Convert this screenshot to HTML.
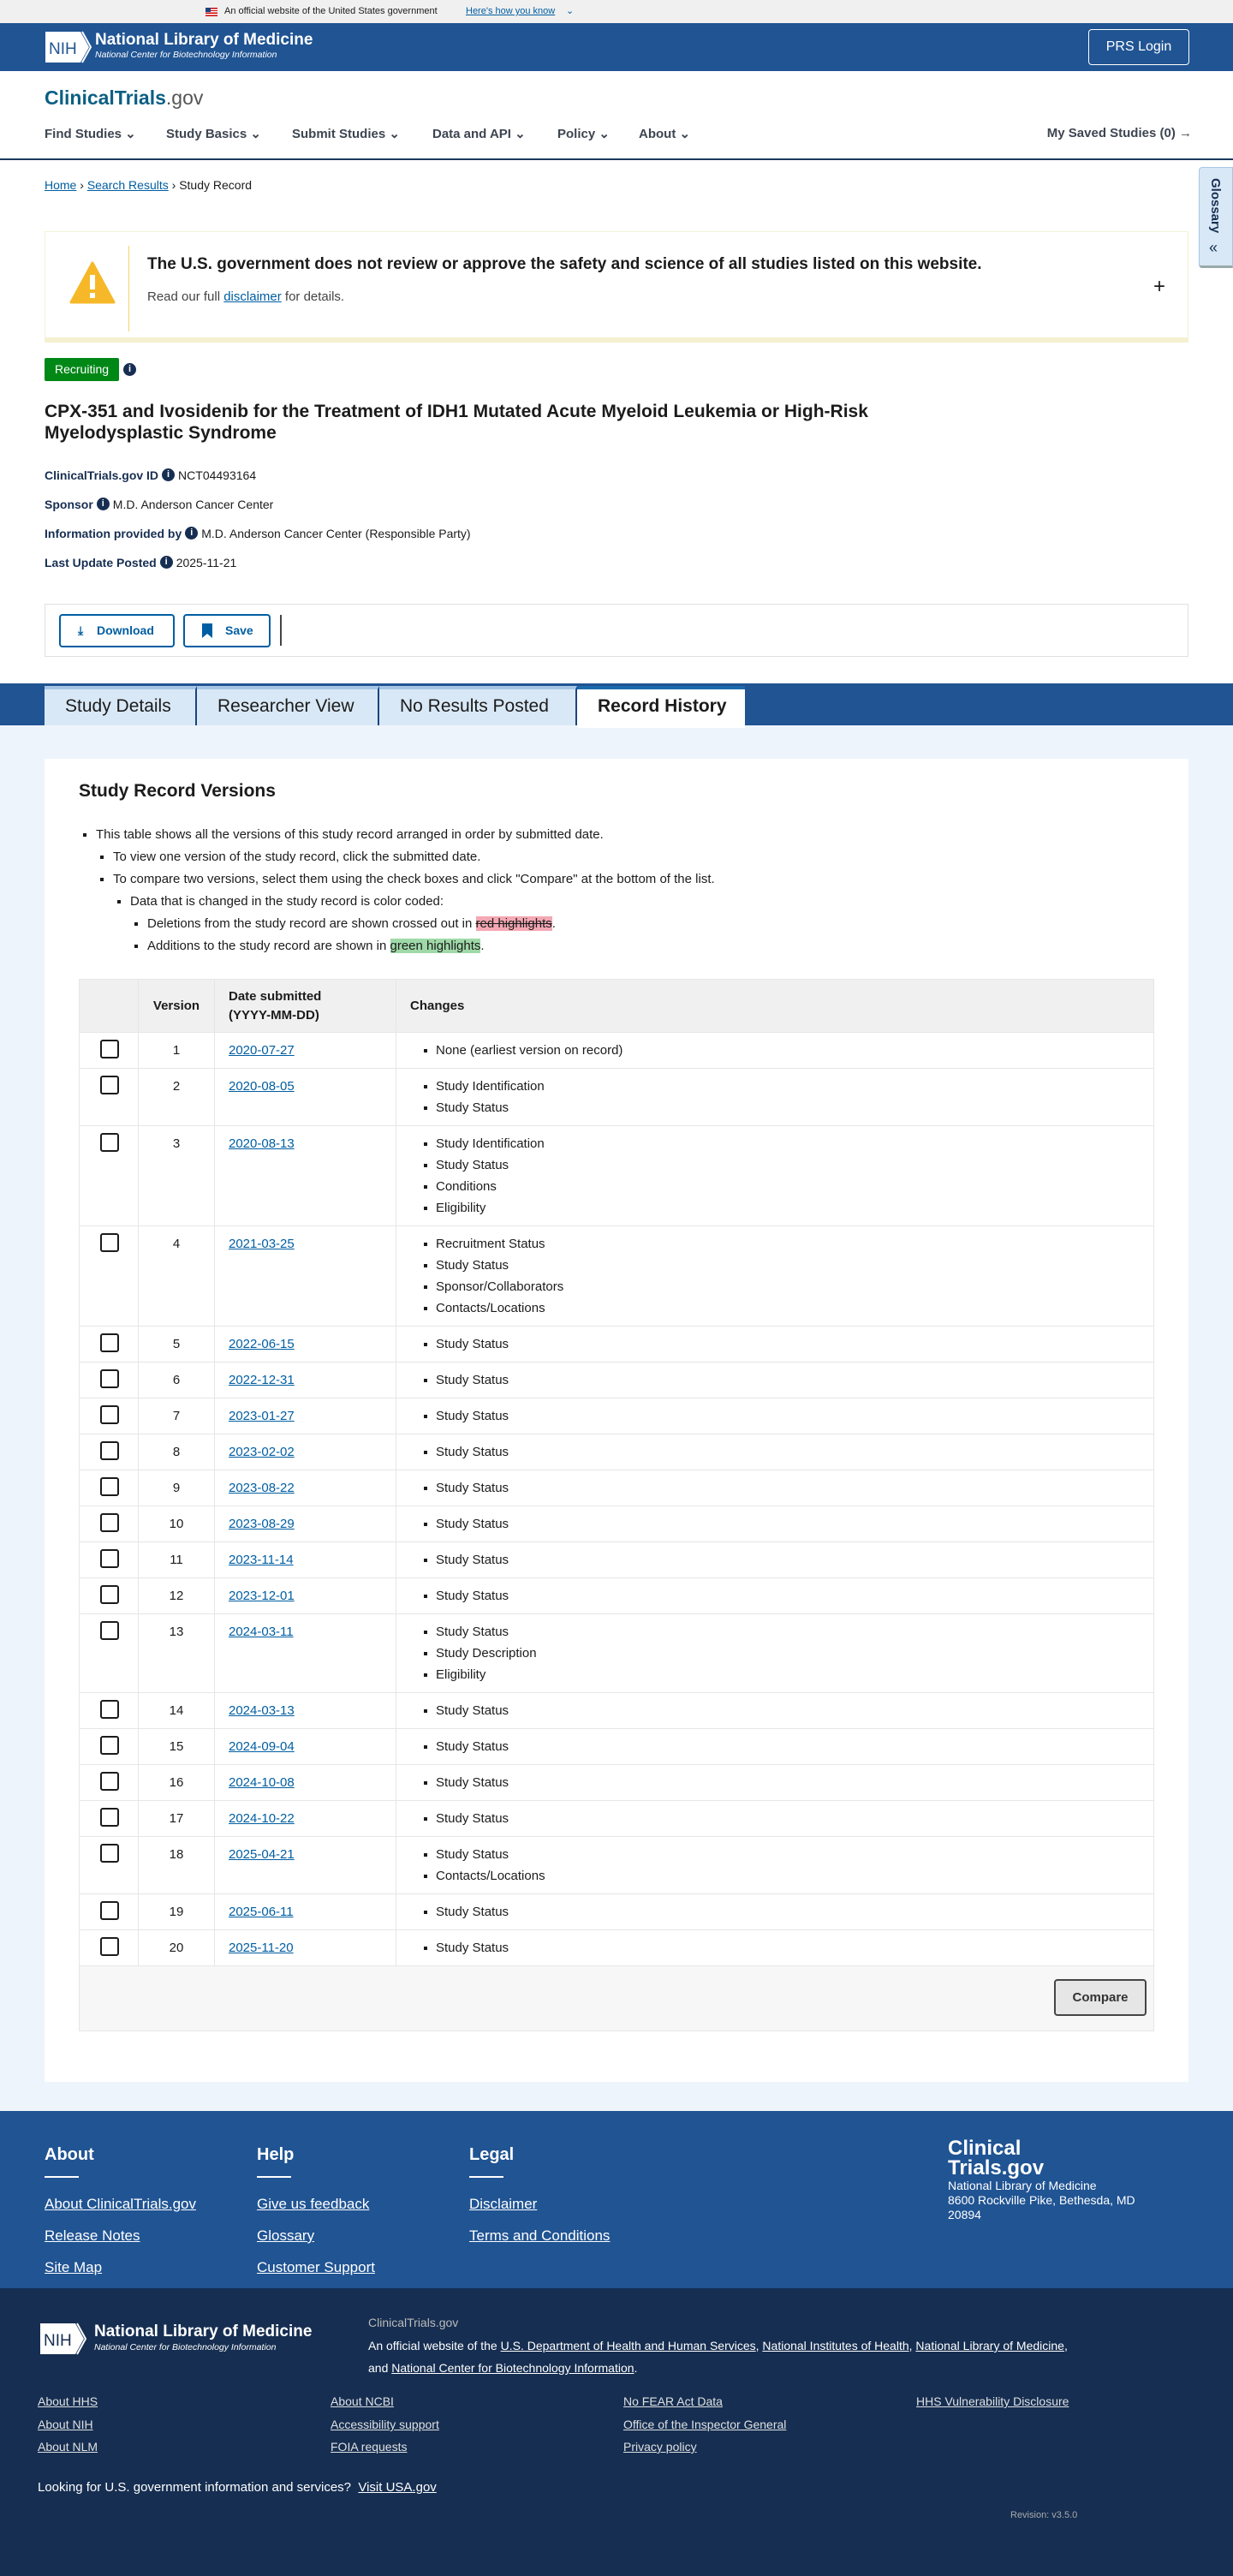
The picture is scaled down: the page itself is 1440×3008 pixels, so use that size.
<!DOCTYPE html>
<html><head><meta charset="utf-8">
<style>
*{box-sizing:border-box;margin:0;padding:0}
body{width:1440px;height:3008px;font-family:"Liberation Sans",Arial,sans-serif;color:#1b1b1b;background:#fff;position:relative;overflow:hidden}
a{color:#005ea2;text-decoration:underline}
.abs{position:absolute}
.gov{top:0;left:0;width:1440px;height:27px;background:#f0f0f0;font-size:11px;line-height:27px}
.hdr{top:27px;left:0;width:1440px;height:56px;background:#205493}
.nav a{color:#3d4551;text-decoration:none;font-weight:bold;font-size:15px}
.info{display:inline-block;width:15px;height:15px;border-radius:50%;background:#162e51;color:#fff;font-size:11px;font-weight:bold;text-align:center;line-height:15px;vertical-align:middle;margin:-3px 4px 0}
.meta{left:52px;font-size:14px}
.meta b{color:#162e51}
.tabs{top:798px;left:0;width:1440px;height:49px;background:#205493}
.tab{position:absolute;top:3px;height:46px;background:#d9e8f6;border-top:4px solid #a6c5e6;border-right:2px solid #1a4480;font-size:21px;line-height:40px;padding-left:24px;color:#1b1b1b}
.card{top:886px;left:52px;width:1336px;height:1545px;background:#fff}
ul.b{font-size:15px;line-height:26px;list-style:none}
ul.b li{position:relative}
ul.b li:before{content:"";position:absolute;left:-15px;top:11px;width:4px;height:4px;background:#1b1b1b}
table{border-collapse:collapse;width:1256px;font-size:15px}
th,td{border:1px solid #e6e6e6;vertical-align:top;text-align:left}
th{background:#f0f0f0;font-weight:bold;font-size:15px;padding:8px 16px;line-height:22px;height:62px;vertical-align:middle}
td{padding:8px 16px;line-height:25px}
td.c{padding:8px 0 0 24px}
.cb{width:22px;height:22px;border:2px solid #1b1b1b;border-radius:3px}
td.v{text-align:center}
td ul{list-style:none;padding-left:30px}
td ul li{position:relative}
td ul li:before{content:"";position:absolute;left:-14px;top:11px;width:4px;height:4px;background:#1b1b1b}
.foot1{top:2465px;left:0;width:1440px;height:207px;background:#205493;color:#fff}
.foot1 h4{font-size:20px;position:absolute;top:40px}
.foot1 .ul{position:absolute;top:76px;width:40px;height:2px;background:#fff}
.foot1 a{color:#fff;font-size:17px;position:absolute}
.foot2{top:2672px;left:0;width:1440px;height:336px;background:#162e51;color:#fff}
.foot2 a{color:#dfe1e2;font-size:14px;position:absolute}
</style></head><body>

<div class="abs gov"><span style="position:absolute;left:240px;top:9px;width:14px;height:10px;background:repeating-linear-gradient(#c00 0 1.4px,#fff 1.4px 2.8px)"><span style="position:absolute;left:0;top:0;width:6px;height:5px;background:#1a4480"></span></span><span style="position:absolute;left:262px">An official website of the United States government</span><a style="position:absolute;left:544px;font-size:11px">Here's how you know</a><span style="position:absolute;left:661px;color:#005ea2">⌄</span></div>

<div class="abs hdr">
 <div class="abs" style="left:52px;top:8px;width:52px;height:38px">
  <svg width="56" height="40" viewBox="0 0 56 40"><path d="M1 2H42L52 20L42 38H1Z" fill="#fff"/><path d="M44 2L54 20L44 38" fill="none" stroke="#fff" stroke-width="2"/><text x="5" y="28" font-family="Liberation Sans" font-size="19" fill="#205493">NIH</text></svg>
 </div>
 <div class="abs" style="left:111px;top:9px;color:#fff;font-size:19px;font-weight:bold">National Library of Medicine</div>
 <div class="abs" style="left:111px;top:31px;color:#fff;font-size:10.5px;font-style:italic">National Center for Biotechnology Information</div>
 <div class="abs" style="left:1271px;top:7px;width:118px;height:42px;border:1px solid #fff;border-radius:4px;color:#fff;font-size:16px;text-align:center;line-height:40px">PRS Login</div>
</div>

<div class="abs" style="left:52px;top:101px;font-size:23px;font-weight:bold;color:#0b5f84">ClinicalTrials<span style="font-weight:normal;color:#555">.gov</span></div>
<div class="abs nav" style="left:52px;top:147px;width:1340px">
 <a style="position:absolute;left:0">Find Studies ⌄</a><a style="position:absolute;left:142px">Study Basics ⌄</a><a style="position:absolute;left:289px">Submit Studies ⌄</a><a style="position:absolute;left:453px">Data and API ⌄</a><a style="position:absolute;left:599px">Policy ⌄</a><a style="position:absolute;left:694px">About ⌄</a>
 <a style="position:absolute;right:0">My Saved Studies (0) →</a>
</div>
<div class="abs" style="left:0;top:185px;width:1440px;height:2px;background:#1a3a5c"></div>

<div class="abs" style="left:52px;top:208px;font-size:14px"><a>Home</a> › <a>Search Results</a> › Study Record</div>

<div class="abs" style="left:1400px;top:195px;width:40px;height:118px;background:#d9e8f6;border:1px solid #a9c6e3;border-radius:4px 0 0 4px;border-bottom:3px solid #9aa">
 <div style="position:absolute;left:10px;top:12px;writing-mode:vertical-rl;font-weight:bold;font-size:15px;color:#162e51">Glossary</div>
 <div style="position:absolute;left:11px;top:83px;font-size:18px;color:#162e51">«</div>
</div>

<div class="abs" style="left:52px;top:270px;width:1336px;height:130px;border:1px solid #f3f1d6;border-bottom:6px solid #f5f1d0;background:#fff">
 <svg class="abs" style="left:28px;top:32px" width="54" height="54" viewBox="0 0 54 54"><path d="M27 4L52 50H2Z" fill="#f6b829" stroke="#f6b829" stroke-width="3" stroke-linejoin="round"/><rect x="24" y="18" width="6" height="17" fill="#fff"/><rect x="24" y="39" width="6" height="6" fill="#fff"/></svg>
 <div class="abs" style="left:97px;top:16px;width:1px;height:100px;background:#f6d36b"></div>
 <div class="abs" style="left:119px;top:27px;font-size:19px;font-weight:bold">The U.S. government does not review or approve the safety and science of all studies listed on this website.</div>
 <div class="abs" style="left:119px;top:67px;font-size:15px;color:#444">Read our full <a>disclaimer</a> for details.</div>
 <div class="abs" style="left:1294px;top:50px;font-size:24px">+</div>
</div>

<div class="abs" style="left:52px;top:418px;width:87px;height:27px;background:#008817;color:#fff;font-size:14px;line-height:27px;text-align:center;border-radius:2px">Recruiting</div>
<span class="abs info" style="left:144px;top:424px;margin:0">i</span>
<div class="abs" style="left:52px;top:468px;font-size:21px;font-weight:bold;line-height:25px;width:1000px">CPX-351 and Ivosidenib for the Treatment of IDH1 Mutated Acute Myeloid Leukemia or High-Risk Myelodysplastic Syndrome</div>
<div class="abs meta" style="top:547px"><b>ClinicalTrials.gov ID</b><span class="info">i</span>NCT04493164</div>
<div class="abs meta" style="top:581px"><b>Sponsor</b><span class="info">i</span>M.D. Anderson Cancer Center</div>
<div class="abs meta" style="top:615px"><b>Information provided by</b><span class="info">i</span>M.D. Anderson Cancer Center (Responsible Party)</div>
<div class="abs meta" style="top:649px"><b>Last Update Posted</b><span class="info">i</span>2025-11-21</div>

<div class="abs" style="left:52px;top:705px;width:1336px;height:62px;border:1px solid #dfe1e2;background:#fff">
 <div class="abs" style="left:16px;top:11px;width:135px;height:39px;border:2px solid #005ea2;border-radius:4px;color:#005ea2;font-weight:bold;font-size:14px;line-height:35px;padding-left:42px">Download<span style="position:absolute;left:20px;top:0">⤓</span></div>
 <div class="abs" style="left:161px;top:11px;width:102px;height:39px;border:2px solid #005ea2;border-radius:4px;color:#005ea2;font-weight:bold;font-size:14px;line-height:35px;padding-left:47px">Save<svg style="position:absolute;left:20px;top:9px" width="12" height="17"><path d="M0 0H12V17L6 12L0 17Z" fill="#005ea2"/></svg></div>
 <div class="abs" style="left:274px;top:12px;width:2px;height:36px;background:#444"></div>
</div>

<div class="abs" style="left:0;top:847px;width:1440px;height:1619px;background:#eef4fb"></div>
<div class="abs tabs">
 <div class="tab" style="left:52px;width:178px">Study Details</div>
 <div class="tab" style="left:230px;width:213px">Researcher View</div>
 <div class="tab" style="left:443px;width:231px">No Results Posted</div>
 <div class="tab" style="left:674px;width:196px;background:#fff;border-top:4px solid #1a6aac;border-right:none;font-weight:bold;height:49px">Record History</div>
</div>

<div class="abs card">
 <div class="abs" style="left:40px;top:26px;font-size:21px;font-weight:bold">Study Record Versions</div>
 <ul class="b abs" style="left:60px;top:76px">
  <li>This table shows all the versions of this study record arranged in order by submitted date.
   <ul class="b" style="padding-left:20px">
    <li>To view one version of the study record, click the submitted date.</li>
    <li>To compare two versions, select them using the check boxes and click "Compare" at the bottom of the list.
     <ul class="b" style="padding-left:20px"><li>Data that is changed in the study record is color coded:
      <ul class="b" style="padding-left:20px">
       <li>Deletions from the study record are shown crossed out in <span style="background:#f4a8b4;text-decoration:line-through">red highlights</span>.</li>
       <li>Additions to the study record are shown in <span style="background:#9fd9a8">green highlights</span>.</li>
      </ul></li></ul>
    </li>
   </ul>
  </li>
 </ul>
 <div class="abs" style="left:40px;top:257px">
 <table>
  <tr><th style="width:69px"></th><th style="width:89px;text-align:center">Version</th><th style="width:212px">Date submitted<br>(YYYY-MM-DD)</th><th>Changes</th></tr>
  <tr><td class="c"><div class="cb"></div></td><td class="v">1</td><td><a>2020-07-27</a></td><td><ul><li>None (earliest version on record)</li></ul></td></tr>
  <tr><td class="c"><div class="cb"></div></td><td class="v">2</td><td><a>2020-08-05</a></td><td><ul><li>Study Identification</li><li>Study Status</li></ul></td></tr>
  <tr><td class="c"><div class="cb"></div></td><td class="v">3</td><td><a>2020-08-13</a></td><td><ul><li>Study Identification</li><li>Study Status</li><li>Conditions</li><li>Eligibility</li></ul></td></tr>
  <tr><td class="c"><div class="cb"></div></td><td class="v">4</td><td><a>2021-03-25</a></td><td><ul><li>Recruitment Status</li><li>Study Status</li><li>Sponsor/Collaborators</li><li>Contacts/Locations</li></ul></td></tr>
  <tr><td class="c"><div class="cb"></div></td><td class="v">5</td><td><a>2022-06-15</a></td><td><ul><li>Study Status</li></ul></td></tr>
  <tr><td class="c"><div class="cb"></div></td><td class="v">6</td><td><a>2022-12-31</a></td><td><ul><li>Study Status</li></ul></td></tr>
  <tr><td class="c"><div class="cb"></div></td><td class="v">7</td><td><a>2023-01-27</a></td><td><ul><li>Study Status</li></ul></td></tr>
  <tr><td class="c"><div class="cb"></div></td><td class="v">8</td><td><a>2023-02-02</a></td><td><ul><li>Study Status</li></ul></td></tr>
  <tr><td class="c"><div class="cb"></div></td><td class="v">9</td><td><a>2023-08-22</a></td><td><ul><li>Study Status</li></ul></td></tr>
  <tr><td class="c"><div class="cb"></div></td><td class="v">10</td><td><a>2023-08-29</a></td><td><ul><li>Study Status</li></ul></td></tr>
  <tr><td class="c"><div class="cb"></div></td><td class="v">11</td><td><a>2023-11-14</a></td><td><ul><li>Study Status</li></ul></td></tr>
  <tr><td class="c"><div class="cb"></div></td><td class="v">12</td><td><a>2023-12-01</a></td><td><ul><li>Study Status</li></ul></td></tr>
  <tr><td class="c"><div class="cb"></div></td><td class="v">13</td><td><a>2024-03-11</a></td><td><ul><li>Study Status</li><li>Study Description</li><li>Eligibility</li></ul></td></tr>
  <tr><td class="c"><div class="cb"></div></td><td class="v">14</td><td><a>2024-03-13</a></td><td><ul><li>Study Status</li></ul></td></tr>
  <tr><td class="c"><div class="cb"></div></td><td class="v">15</td><td><a>2024-09-04</a></td><td><ul><li>Study Status</li></ul></td></tr>
  <tr><td class="c"><div class="cb"></div></td><td class="v">16</td><td><a>2024-10-08</a></td><td><ul><li>Study Status</li></ul></td></tr>
  <tr><td class="c"><div class="cb"></div></td><td class="v">17</td><td><a>2024-10-22</a></td><td><ul><li>Study Status</li></ul></td></tr>
  <tr><td class="c"><div class="cb"></div></td><td class="v">18</td><td><a>2025-04-21</a></td><td><ul><li>Study Status</li><li>Contacts/Locations</li></ul></td></tr>
  <tr><td class="c"><div class="cb"></div></td><td class="v">19</td><td><a>2025-06-11</a></td><td><ul><li>Study Status</li></ul></td></tr>
  <tr><td class="c"><div class="cb"></div></td><td class="v">20</td><td><a>2025-11-20</a></td><td><ul><li>Study Status</li></ul></td></tr>
  <tr><td colspan="4" style="background:#f7f7f7;height:76px;padding:0;position:relative"><div style="position:absolute;right:8px;top:15px;width:108px;height:43px;border:2px solid #454545;border-radius:4px;background:#e6e6e6;font-weight:bold;font-size:15px;text-align:center;line-height:39px;color:#333">Compare</div></td></tr>
 </table>
 </div>
</div>

<div class="abs foot1">
 <h4 style="left:52px">About</h4><div class="ul" style="left:52px"></div>
 <a style="left:52px;top:99px">About ClinicalTrials.gov</a><a style="left:52px;top:136px">Release Notes</a><a style="left:52px;top:173px">Site Map</a>
 <h4 style="left:300px">Help</h4><div class="ul" style="left:300px"></div>
 <a style="left:300px;top:99px">Give us feedback</a><a style="left:300px;top:136px">Glossary</a><a style="left:300px;top:173px">Customer Support</a>
 <h4 style="left:548px">Legal</h4><div class="ul" style="left:548px"></div>
 <a style="left:548px;top:99px">Disclaimer</a><a style="left:548px;top:136px">Terms and Conditions</a>
 <div class="abs" style="left:1107px;top:32px;font-size:24px;font-weight:bold;line-height:23px">Clinical<br>Trials.gov</div>
 <div class="abs" style="left:1107px;top:79px;font-size:14px;line-height:17px">National Library of Medicine<br>8600 Rockville Pike, Bethesda, MD<br>20894</div>
</div>

<div class="abs foot2">
 <div class="abs" style="left:44px;top:39px">
  <svg width="60" height="40" viewBox="0 0 56 40"><path d="M1 2H42L52 20L42 38H1Z" fill="#fff"/><path d="M44 2L54 20L44 38" fill="none" stroke="#fff" stroke-width="2"/><text x="5" y="28" font-family="Liberation Sans" font-size="19" fill="#162e51">NIH</text></svg>
 </div>
 <div class="abs" style="left:110px;top:40px;font-size:19px;font-weight:bold">National Library of Medicine</div>
 <div class="abs" style="left:110px;top:63px;font-size:10.5px;font-style:italic">National Center for Biotechnology Information</div>
 <div class="abs" style="left:430px;top:32px;font-size:14px;color:#bbb">ClinicalTrials.gov</div>
 <div class="abs" style="left:430px;top:54px;font-size:14px;line-height:26px;width:940px;color:#fff">An official website of the <u>U.S. Department of Health and Human Services</u>, <u>National Institutes of Health</u>, <u>National Library of Medicine</u>,<br>and <u>National Center for Biotechnology Information</u>.</div>
 <a style="left:44px;top:124px">About HHS</a><a style="left:44px;top:151px">About NIH</a><a style="left:44px;top:177px">About NLM</a>
 <a style="left:386px;top:124px">About NCBI</a><a style="left:386px;top:151px">Accessibility support</a><a style="left:386px;top:177px">FOIA requests</a>
 <a style="left:728px;top:124px">No FEAR Act Data</a><a style="left:728px;top:151px">Office of the Inspector General</a><a style="left:728px;top:177px">Privacy policy</a>
 <a style="left:1070px;top:124px">HHS Vulnerability Disclosure</a>
 <div class="abs" style="left:44px;top:224px;font-size:15px">Looking for U.S. government information and services? &nbsp;<u>Visit USA.gov</u></div>
 <div class="abs" style="left:1180px;top:259px;font-size:11px;color:#aaa">Revision: v3.5.0</div>
</div>
</body></html>
